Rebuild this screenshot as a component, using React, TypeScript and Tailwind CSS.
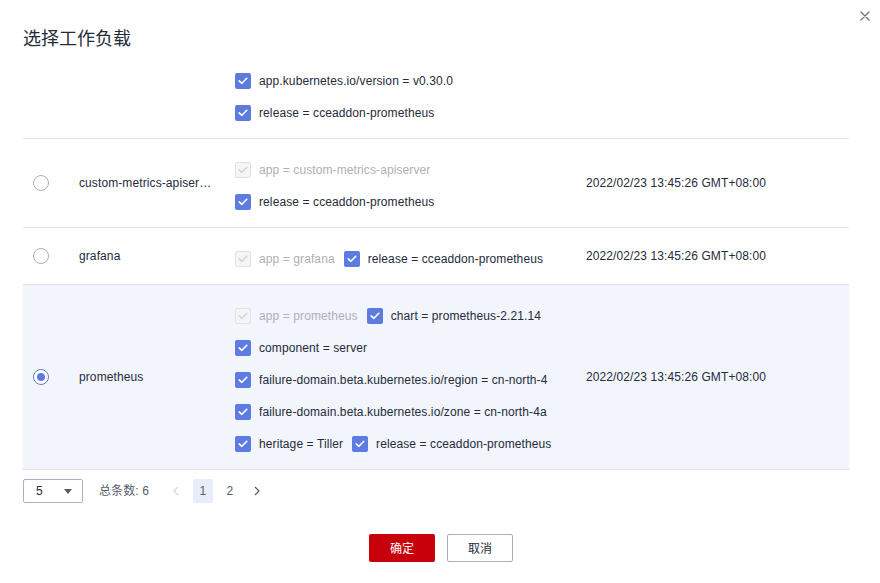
import React from "react";

type Label = { text: string; disabled?: boolean };

type Row = {
  name?: string;
  labels: Label[];
  date?: string;
  selected?: boolean;
  partial?: boolean;
};

const DATE = "2022/02/23 13:45:26 GMT+08:00";

const ROWS: Row[] = [
  {
    partial: true,
    labels: [
      { text: "app.kubernetes.io/version = v0.30.0" },
      { text: "release = cceaddon-prometheus" },
    ],
  },
  {
    name: "custom-metrics-apiserver",
    date: DATE,
    labels: [
      { text: "app = custom-metrics-apiserver", disabled: true },
      { text: "release = cceaddon-prometheus" },
    ],
  },
  {
    name: "grafana",
    date: DATE,
    labels: [
      { text: "app = grafana", disabled: true },
      { text: "release = cceaddon-prometheus" },
    ],
  },
  {
    name: "prometheus",
    date: DATE,
    selected: true,
    labels: [
      { text: "app = prometheus", disabled: true },
      { text: "chart = prometheus-2.21.14" },
      { text: "component = server" },
      { text: "failure-domain.beta.kubernetes.io/region = cn-north-4" },
      { text: "failure-domain.beta.kubernetes.io/zone = cn-north-4a" },
      { text: "heritage = Tiller" },
      { text: "release = cceaddon-prometheus" },
    ],
  },
];

function Checkbox({ disabled }: { disabled?: boolean }) {
  return (
    <span
      className={
        disabled
          ? "w-4 h-4 shrink-0 rounded-[2px] border border-[#dfe1e6] bg-[#f5f5f6] flex items-center justify-center"
          : "w-4 h-4 shrink-0 rounded-[2px] bg-[#5e7ce0] flex items-center justify-center"
      }
    >
      <svg width="10" height="8" viewBox="0 0 10 8" fill="none">
        <path
          d="M1.2 3.8 L3.9 6.3 L8.8 1.3"
          stroke={disabled ? "#d3d5da" : "#ffffff"}
          strokeWidth="1.6"
          strokeLinecap="round"
          strokeLinejoin="round"
        />
      </svg>
    </span>
  );
}

function Radio({ checked }: { checked?: boolean }) {
  return (
    <span
      className={
        checked
          ? "w-4 h-4 shrink-0 rounded-full border border-[#5e7ce0] bg-white flex items-center justify-center"
          : "w-4 h-4 shrink-0 rounded-full border border-[#adb0b8] bg-white block"
      }
    >
      {checked && <span className="w-2 h-2 rounded-full bg-[#5e7ce0]" />}
    </span>
  );
}

function TableRow({ row }: { row: Row }) {
  return (
    <div
      className={
        "flex items-center border-b border-[#dfe1e6] " +
        (row.selected ? "bg-[#f2f5fc]" : "bg-white")
      }
    >
      <div className="w-[56px] shrink-0 pl-[10px] flex items-center">
        {!row.partial && <Radio checked={row.selected} />}
      </div>
      <div className="w-[156px] shrink-0 pr-[22px] truncate">{row.name}</div>
      <div
        className={
          "w-[351px] shrink-0 pr-[14px] pb-[13px] flex flex-wrap gap-x-[9px] gap-y-2 " +
          (row.partial ? "pt-[7px]" : "pt-[19px]")
        }
      >
        {row.labels.map((l) => (
          <div key={l.text} className="h-6 flex items-center gap-2">
            <Checkbox disabled={l.disabled} />
            <span className={l.disabled ? "text-[#adb0b8] whitespace-nowrap" : "whitespace-nowrap"}>
              {l.text}
            </span>
          </div>
        ))}
      </div>
      <div className="flex-1 whitespace-nowrap">{row.date}</div>
    </div>
  );
}

export default function App() {
  return (
    <div className="relative w-[880px] h-[583px] bg-white text-[12px] tracking-[0.1px] text-[#252b3a] font-['Liberation_Sans','Noto_Sans_CJK_SC',sans-serif] overflow-hidden">
      <button type="button" className="absolute top-[11px] right-[10px] w-[10px] h-[10px]">
        <svg width="10" height="10" viewBox="0 0 10 10" fill="none">
          <path d="M1 1 L9 9 M9 1 L1 9" stroke="#71757f" strokeWidth="1.3" strokeLinecap="round" />
        </svg>
      </button>

      <div className="pl-[23px] pr-[31px] pt-[25px]">
        <h2 className="h-6 leading-6 text-[18px] tracking-normal font-['Noto_Sans_CJK_SC',sans-serif] text-[#252b3a]">
          选择工作负载
        </h2>

        <div className="mt-[13px]">
          {ROWS.map((r, i) => (
            <TableRow key={i} row={r} />
          ))}
        </div>

        <div className="mt-[9px] h-6 flex items-center">
          <div className="w-[60px] h-6 border border-[#adb0b8] rounded-[2px] flex items-center justify-between pl-3 pr-[10px]">
            <span>5</span>
            <svg width="8" height="5" viewBox="0 0 8 5">
              <path d="M0 0 L8 0 L4 5 Z" fill="#575d6c" />
            </svg>
          </div>
          <span className="ml-4 text-[#575d6c]">总条数: 6</span>
          <div className="ml-[17px] flex items-center gap-[7px] text-[#575d6c]">
            <span className="w-5 h-6 flex items-center justify-center">
              <svg width="6" height="10" viewBox="0 0 6 10" fill="none">
                <path d="M5 1 L1 5 L5 9" stroke="#d3d5da" strokeWidth="1.2" />
              </svg>
            </span>
            <span className="w-5 h-6 rounded-[2px] bg-[#e9edfa] flex items-center justify-center">1</span>
            <span className="w-5 h-6 flex items-center justify-center">2</span>
            <span className="w-5 h-6 flex items-center justify-center">
              <svg width="6" height="10" viewBox="0 0 6 10" fill="none">
                <path d="M1 1 L5 5 L1 9" stroke="#575d6c" strokeWidth="1.2" />
              </svg>
            </span>
          </div>
        </div>

        <div className="mt-[31px] flex justify-center gap-3 pl-[10px]">
          <button
            type="button"
            className="w-[66px] h-7 rounded-[2px] bg-[#c7000b] text-white font-['Noto_Sans_CJK_SC',sans-serif]"
          >
            确定
          </button>
          <button
            type="button"
            className="w-[66px] h-7 rounded-[2px] border border-[#adb0b8] bg-white text-[#252b3a] font-['Noto_Sans_CJK_SC',sans-serif]"
          >
            取消
          </button>
        </div>
      </div>
    </div>
  );
}
